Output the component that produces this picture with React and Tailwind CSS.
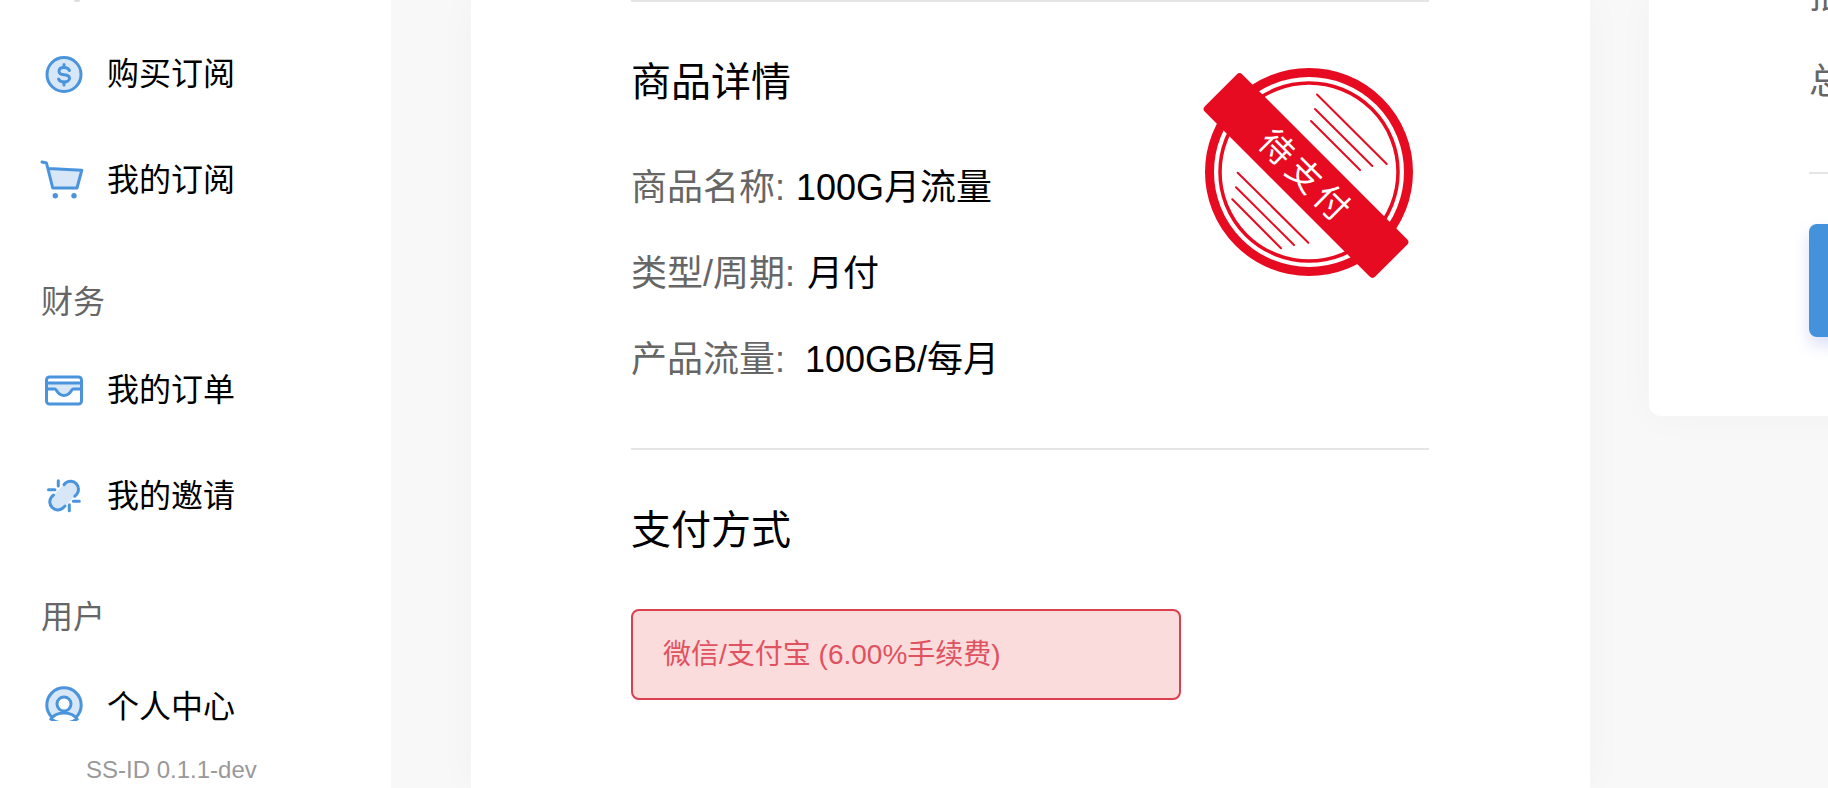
const BLUE = '#4a94de';
const LIGHT = '#d8e7f8';

function IconDollar() {
  return (
    <svg width="48" height="48" viewBox="0 0 48 48" fill="none" stroke={BLUE} strokeWidth="3" strokeLinecap="round">
      <circle cx="24" cy="24.5" r="17" fill={LIGHT} />
      <path d="M29.5 20.5C28.5 18.5 26.5 17.5 24 17.5C21 17.5 19 19 19 21.3C19 23.6 21 24.6 24 24.8C27 25 29.5 26 29.5 28.3C29.5 30.6 27 32 24 32C21.5 32 19.5 31 18.5 29" />
      <path d="M24 14.5V17.5M24 32V35" />
    </svg>
  );
}

function IconCart() {
  return (
    <svg width="48" height="48" viewBox="0 0 48 48" fill="none" stroke={BLUE} strokeWidth="3" strokeLinecap="round" strokeLinejoin="round">
      <path d="M8.5 12.5L41.5 14L37 32H12.7Z" fill={LIGHT} stroke="none" />
      <path d="M2 6L6.5 7L12.7 32H37L41.8 14.2L8.5 12.5" />
      <circle cx="15.3" cy="39.7" r="2.7" fill={BLUE} stroke="none" />
      <circle cx="34" cy="39.7" r="2.7" fill={BLUE} stroke="none" />
    </svg>
  );
}

function IconInbox() {
  return (
    <svg width="48" height="48" viewBox="0 0 48 48" fill="none" stroke={BLUE} strokeWidth="3" strokeLinecap="round" strokeLinejoin="round">
      <path d="M7 17H41V23H33C31 23 31 30 24 30C17 30 17 23 15 23H7Z" fill={LIGHT} stroke="none" />
      <rect x="6.5" y="11" width="35" height="27" rx="3" />
      <path d="M6.5 17H41.5" />
      <path d="M6.5 23H15C17 23 17 29.5 24 29.5C31 29.5 31 23 33 23H41.5" />
    </svg>
  );
}

function IconLink() {
  return (
    <svg width="48" height="48" viewBox="0 0 48 48" fill="none" stroke={BLUE} strokeWidth="3" strokeLinecap="round">
      <path d="M17 30.7L31.3 16.5" stroke={LIGHT} strokeWidth="16" />
      <path d="M13.5 23L11.4 25.1A8 8 0 0 0 22.6 36.3L25 34" />
      <path d="M24 12.6L25.7 10.9A8 8 0 0 1 36.9 22.1L34.8 24.2" />
      <path d="M8.5 17.7H15M18.3 8.7V14M33.3 29.3H39.3M29.3 32.7V38.7" />
    </svg>
  );
}

function IconUser() {
  return (
    <svg width="48" height="48" viewBox="0 0 48 48" fill="none" stroke={BLUE} strokeWidth="3">
      <circle cx="24" cy="24" r="17.2" fill={LIGHT} />
      <path d="M11 38C14 33.5 19 32 24 32C29 32 34 33.5 37 38C33 41 29 42 24 42C19 42 15 41 11 38Z" fill="#fff" />
      <circle cx="24" cy="23" r="7" fill="#fff" />
    </svg>
  );
}

function NavItem({ icon, label, className = 'h-[106px]', labelClass = '' }) {
  return (
    <div className={`flex items-center gap-[19px] pl-[40px] text-[32px] leading-[48px] text-black ${className}`}>
      {icon}
      <span className={labelClass}>{label}</span>
    </div>
  );
}

function Stamp() {
  return (
    <svg className="absolute left-[709px] top-[50px]" width="260" height="250" viewBox="0 0 260 250" fill="none">
      <circle cx="129" cy="122" r="99.5" stroke="#e60b20" strokeWidth="9" />
      <circle cx="129" cy="122" r="89" stroke="#e60b20" strokeWidth="3.5" />
      <g stroke="#e60b20" strokeWidth="2" strokeLinecap="round">
        <path d="M137 44.5L206.7 114M135 59L192.3 116M131 71L180 120" />
        <path d="M57.7 122.7L128.3 192.7M56 137.3L114 195M52.3 149.3L101 198.3" />
      </g>
      <rect x="-120.5" y="-26.5" width="241" height="53" rx="4" fill="#e60b20" transform="translate(126 125.5) rotate(45)" />
      <text
        transform="translate(126 127) rotate(45)"
        textAnchor="middle"
        dominantBaseline="central"
        fontSize="34"
        letterSpacing="5"
        fill="#fff"
      >
        待支付
      </text>
    </svg>
  );
}

function Row({ label, value, className = '', valueClass = '' }) {
  return (
    <p className={`whitespace-pre-wrap text-[36px] leading-[54px] text-[#666] ${className}`}>
      {label} <span className={`text-black ${valueClass}`}>{value}</span>
    </p>
  );
}

export default function App() {
  return (
    <div className="flex h-[788px] w-[1828px] overflow-hidden bg-[#f8f8f8] font-['Liberation_Sans','Noto_Sans_CJK_SC',sans-serif]">
      {/* Sidebar */}
      <aside className="flex w-[391px] shrink-0 flex-col bg-white">
        <nav className="h-[721px] shrink-0 overflow-hidden">
          <div className="ml-[74px] h-[2px] w-[6px] rounded-b-full bg-[#ddd]" />
          <div className="h-[18px]" />
          <NavItem icon={<IconDollar />} label="购买订阅" className="h-[107px]" />
          <NavItem icon={<IconCart />} label="我的订阅" />
          <h3 className="pb-[11px] pl-[41px] pt-[45px] text-[32px] leading-[48px] text-[#666]">财务</h3>
          <NavItem icon={<IconInbox />} label="我的订单" />
          <NavItem icon={<IconLink />} label="我的邀请" />
          <h3 className="pb-[11px] pl-[41px] pt-[44px] text-[32px] leading-[48px] text-[#666]">用户</h3>
          <NavItem icon={<IconUser />} label="个人中心" labelClass="mt-[3px]" />
        </nav>
        <div className="pl-[86px] pt-[31px] text-[24px] leading-[36px] text-[#999]">SS-ID 0.1.1-dev</div>
      </aside>

      {/* Order card */}
      <main className="relative ml-[80px] h-[788px] w-[1119px] shrink-0 bg-white px-[160px] shadow-[0_0_40px_rgba(0,0,0,0.03)]">
        <div className="h-[2px] w-[798px] bg-[#e5e5e5]" />
        <h2 className="mt-[50px] text-[40px] leading-[60px] text-black">商品详情</h2>
        <Row label="商品名称:" value="100G月流量" className="mt-[49px]" valueClass="ml-[1px]" />
        <Row label="类型/周期:" value="月付" className="mt-[32px]" valueClass="ml-[2px]" />
        <Row label="产品流量: " value="100GB/每月" className="mt-[32px]" />
        <div className="mt-[61px] h-[2px] w-[798px] bg-[#e5e5e5]" />
        <h2 className="mt-[50px] text-[40px] leading-[60px] text-black">支付方式</h2>
        <div className="mt-[49px] flex h-[91px] w-[550px] items-center rounded-[8px] border-2 border-[#dc3f4d] bg-[#fadcdd] pl-[30px] text-[28px] text-[#e0525f]">
          微信/支付宝 (6.00%手续费)
        </div>
        <Stamp />
      </main>

      {/* Summary card */}
      <section className="ml-[59px] h-[416px] w-[700px] shrink-0 rounded-b-[12px] bg-white pl-[160px] shadow-[0_0_40px_rgba(0,0,0,0.03)]">
        <p className="mt-[-31px] text-[36px] leading-[54px] text-[#666]">抵扣</p>
        <p className="mt-[32px] text-[36px] leading-[54px] text-[#666]">总计</p>
        <div className="mt-[63px] h-[2px] bg-[#e5e5e5]" />
        <div className="mt-[50px] h-[113px] rounded-[8px] bg-[#4491dc] shadow-[0_8px_16px_rgba(68,100,220,0.2)]" />
      </section>
    </div>
  );
}
